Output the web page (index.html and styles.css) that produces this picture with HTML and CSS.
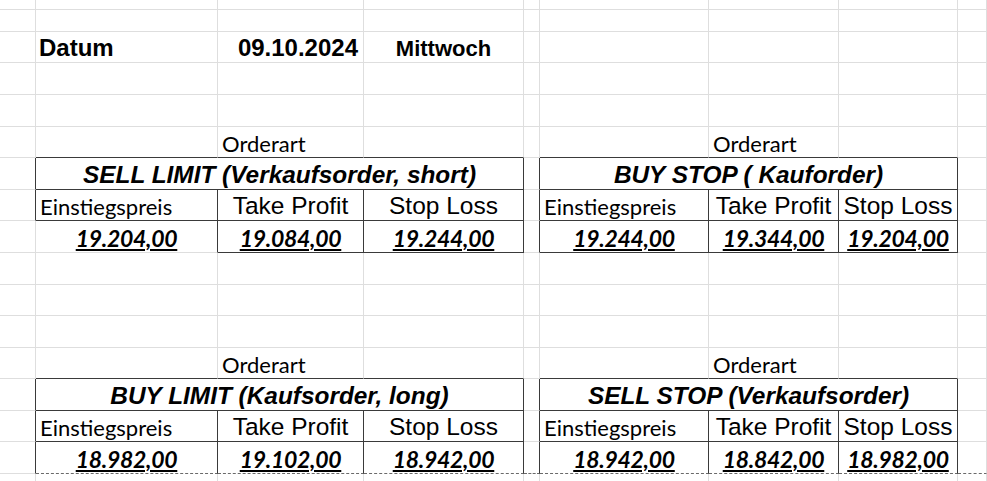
FILE: index.html
```html
<!DOCTYPE html>
<html lang="de">
<head>
<meta charset="utf-8">
<title>Orderarten</title>
<link rel="stylesheet" href="styles.css">
</head>
<body>
<div class="sheet">
  <div class="row h10"><div class="c"></div><div class="c"></div><div class="c"></div><div class="c"></div><div class="c"></div><div class="c"></div><div class="c"></div><div class="c"></div><div class="c"></div></div>
  <div class="row h22"><div class="c"></div><div class="c"></div><div class="c"></div><div class="c"></div><div class="c"></div><div class="c"></div><div class="c"></div><div class="c"></div><div class="c"></div></div>
  <div class="row h31">
    <div class="c"></div>
    <div class="c left arial head">Datum</div>
    <div class="c right arial head">09.10.2024</div>
    <div class="c center arial day">Mittwoch</div>
    <div class="c"></div><div class="c"></div><div class="c"></div><div class="c"></div><div class="c"></div>
  </div>
  <div class="row h32"><div class="c"></div><div class="c"></div><div class="c"></div><div class="c"></div><div class="c"></div><div class="c"></div><div class="c"></div><div class="c"></div><div class="c"></div></div>
  <div class="row h32"><div class="c"></div><div class="c"></div><div class="c"></div><div class="c"></div><div class="c"></div><div class="c"></div><div class="c"></div><div class="c"></div><div class="c"></div></div>

  <!-- Block 1 -->
  <div class="row h31">
    <div class="c"></div>
    <div class="c bb"></div>
    <div class="c bb left cal label">Orderart</div>
    <div class="c bb"></div>
    <div class="c"></div>
    <div class="c bb"></div>
    <div class="c bb left cal label">Orderart</div>
    <div class="c bb"></div>
    <div class="c"></div>
  </div>
  <div class="row h32">
    <div class="c br"></div>
    <div class="c span3 br bb arial title">SELL LIMIT (Verkaufsorder, short)</div>
    <div class="c br"></div>
    <div class="c span3 br bb arial title">BUY STOP ( Kauforder)</div>
    <div class="c"></div>
  </div>
  <div class="row h31">
    <div class="c br"></div>
    <div class="c br bb left cal label col">Einstiegspreis</div>
    <div class="c br bb center arial col">Take Profit</div>
    <div class="c br bb center arial col">Stop Loss</div>
    <div class="c br"></div>
    <div class="c br bb left cal label col">Einstiegspreis</div>
    <div class="c br bb center arial col">Take Profit</div>
    <div class="c br bb center arial col">Stop Loss</div>
    <div class="c"></div>
  </div>
  <div class="row h32">
    <div class="c"></div>
    <div class="c br center cal val"><span>19.204,00</span></div>
    <div class="c br bb center cal val"><span>19.084,00</span></div>
    <div class="c br bb center cal val"><span>19.244,00</span></div>
    <div class="c br"></div>
    <div class="c br bb center cal val"><span>19.244,00</span></div>
    <div class="c br bb center cal val"><span>19.344,00</span></div>
    <div class="c br bb center cal val"><span>19.204,00</span></div>
    <div class="c"></div>
  </div>

  <div class="row h32"><div class="c"></div><div class="c"></div><div class="c"></div><div class="c"></div><div class="c"></div><div class="c"></div><div class="c"></div><div class="c"></div><div class="c"></div></div>
  <div class="row h31"><div class="c"></div><div class="c"></div><div class="c"></div><div class="c"></div><div class="c"></div><div class="c"></div><div class="c"></div><div class="c"></div><div class="c"></div></div>
  <div class="row h32"><div class="c"></div><div class="c"></div><div class="c"></div><div class="c"></div><div class="c"></div><div class="c"></div><div class="c"></div><div class="c"></div><div class="c"></div></div>

  <!-- Block 2 -->
  <div class="row h31">
    <div class="c"></div>
    <div class="c bb"></div>
    <div class="c bb left cal label">Orderart</div>
    <div class="c bb"></div>
    <div class="c"></div>
    <div class="c bb"></div>
    <div class="c bb left cal label">Orderart</div>
    <div class="c bb"></div>
    <div class="c"></div>
  </div>
  <div class="row h32">
    <div class="c br"></div>
    <div class="c span3 br bb arial title">BUY LIMIT (Kaufsorder, long)</div>
    <div class="c br"></div>
    <div class="c span3 br bb arial title">SELL STOP (Verkaufsorder)</div>
    <div class="c"></div>
  </div>
  <div class="row h31">
    <div class="c br"></div>
    <div class="c br bb left cal label col">Einstiegspreis</div>
    <div class="c br bb center arial col">Take Profit</div>
    <div class="c br bb center arial col">Stop Loss</div>
    <div class="c br"></div>
    <div class="c br bb left cal label col">Einstiegspreis</div>
    <div class="c br bb center arial col">Take Profit</div>
    <div class="c br bb center arial col">Stop Loss</div>
    <div class="c"></div>
  </div>
  <div class="row h32">
    <div class="c br"></div>
    <div class="c br dash center cal val"><span>18.982,00</span></div>
    <div class="c br dash center cal val"><span>19.102,00</span></div>
    <div class="c br dash center cal val"><span>18.942,00</span></div>
    <div class="c br dash"></div>
    <div class="c br dash center cal val"><span>18.942,00</span></div>
    <div class="c br dash center cal val"><span>18.842,00</span></div>
    <div class="c br dash center cal val"><span>18.982,00</span></div>
    <div class="c dash"></div>
  </div>
  <div class="row h8"><div class="c"></div><div class="c"></div><div class="c"></div><div class="c"></div><div class="c"></div><div class="c"></div><div class="c"></div><div class="c"></div><div class="c"></div></div>
</div>
</body>
</html>
```

FILE: styles.css
```css
html, body {
  margin: 0;
  padding: 0;
  background: #ffffff;
}

body {
  width: 987px;
  height: 481px;
  overflow: hidden;
  color: #000;
}

.sheet {
  display: flex;
  flex-direction: column;
}

.row {
  display: grid;
  grid-template-columns: 36px 182px 146px 160px 16px 169px 130px 119px 1fr;
}

.h8 { height: 8px; }
.h10 { height: 10px; }
.h22 { height: 22px; }
.h31 { height: 31px; }
.h32 { height: 32px; }

.c {
  box-sizing: border-box;
  min-width: 0;
  border-right: 1px solid #dedede;
  border-bottom: 1px solid #dedede;
  display: flex;
  align-items: flex-end;
  white-space: nowrap;
  overflow: visible;
}

.br { border-right-color: #3a3a3a; }
.bb { border-bottom-color: #3a3a3a; }
.dash { border-bottom: 1px dashed #6a6a6a; }

.span3 {
  grid-column: span 3;
  justify-content: center;
}

.left { justify-content: flex-start; padding-left: 3px; }
.center { justify-content: center; }
.right { justify-content: flex-end; padding-right: 5px; }

.arial { font-family: "Liberation Sans", Arial, sans-serif; }
.cal { font-family: Lato, "Liberation Sans", sans-serif; }

.cal.left { padding-left: 4px; }

.head {
  font-size: 24px;
  font-weight: bold;
}

.day {
  font-size: 22px;
  font-weight: bold;
}

.title {
  font-size: 24.4px;
  font-weight: bold;
  font-style: italic;
}

.label {
  font-size: 22px;
}

.col {
  font-size: 24.5px;
}

.cal.col {
  font-size: 22px;
}

.val {
  font-size: 23px;
  font-weight: bold;
  font-style: italic;
  letter-spacing: -0.3px;
}

.val span {
  text-decoration: underline;
  text-decoration-thickness: 2px;
  text-underline-offset: 2px;
}
```
